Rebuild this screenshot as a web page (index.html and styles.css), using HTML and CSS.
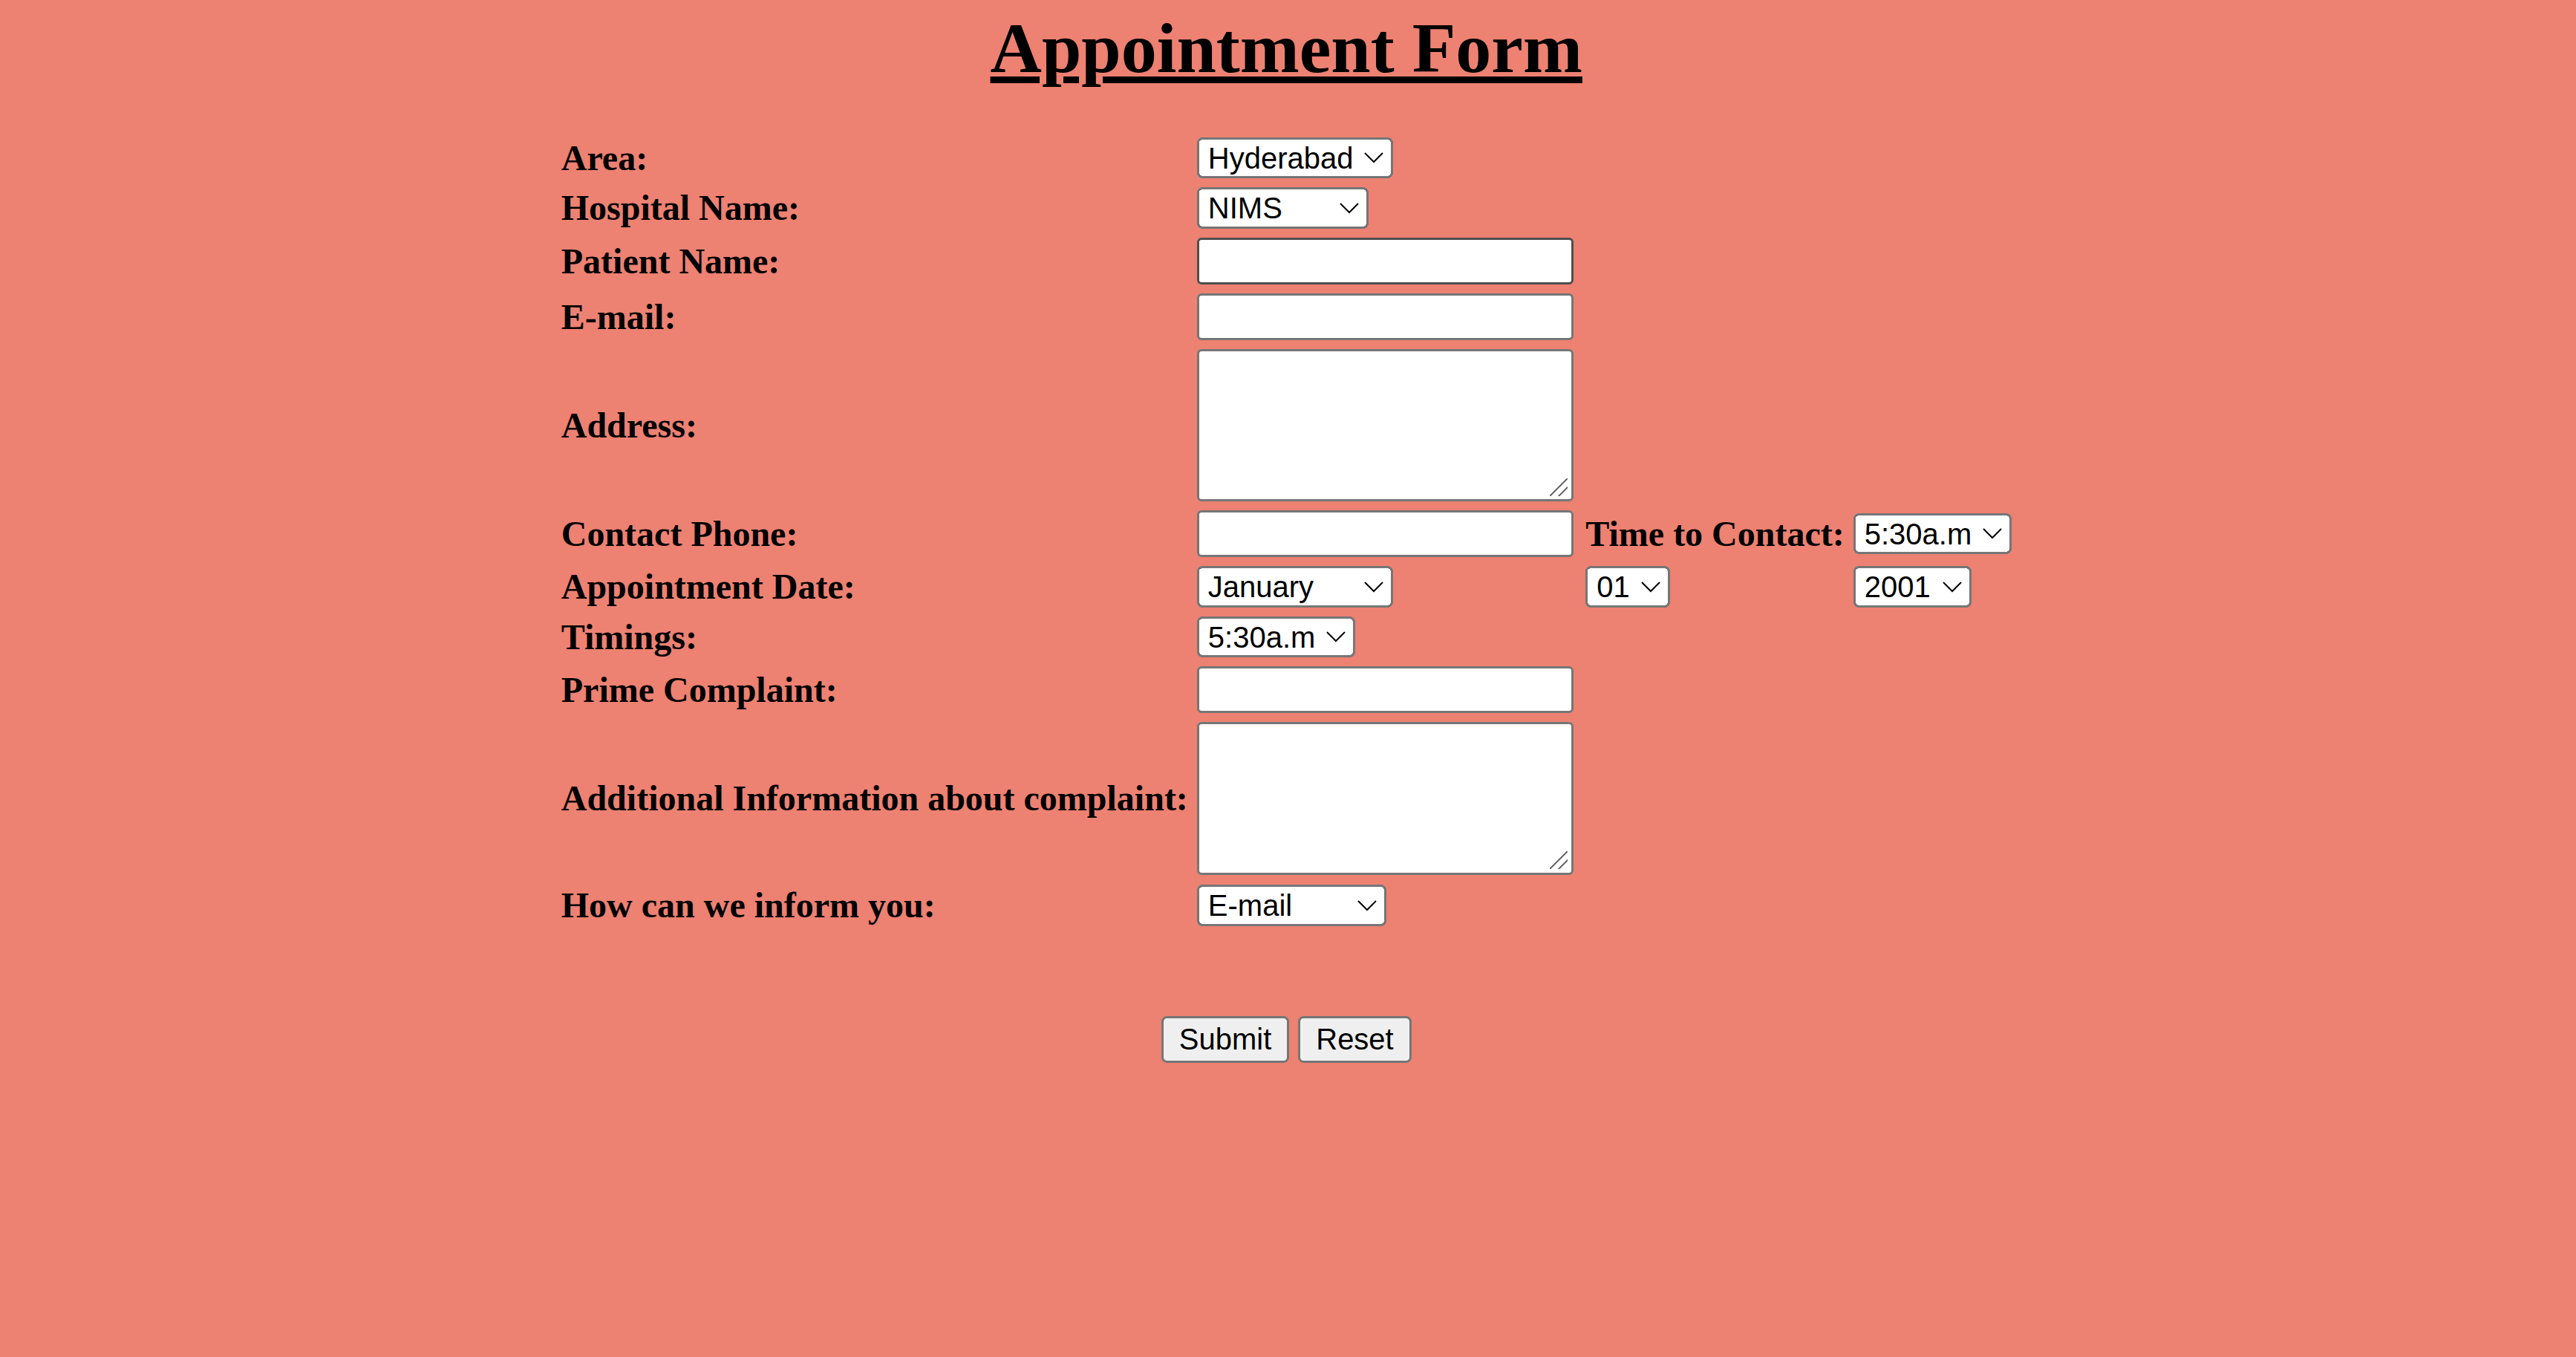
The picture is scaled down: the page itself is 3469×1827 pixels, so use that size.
FILE: index.html
```html
<!DOCTYPE html>
<html lang="en">
<head>
<meta charset="utf-8">
<title>Appointment Form</title>
<link rel="stylesheet" href="styles.css">
</head>
<body>
<h1 class="title">Appointment Form</h1>
<form class="appt-form">
  <table class="grid">
    <tr>
      <th class="lbl">Area:</th>
      <td class="ctrl"><select class="sel sel-area"><option>Hyderabad</option><option>Secunderabad</option></select></td>
    </tr>
    <tr>
      <th class="lbl">Hospital Name:</th>
      <td><select class="sel sel-hosp"><option>NIMS</option><option>Apollo</option><option>Yashoda</option></select></td>
    </tr>
    <tr>
      <th class="lbl">Patient Name:</th>
      <td><input type="text" class="field field-hover"></td>
    </tr>
    <tr>
      <th class="lbl">E-mail:</th>
      <td><input type="text" class="field"></td>
    </tr>
    <tr>
      <th class="lbl">Address:</th>
      <td><textarea class="area"></textarea></td>
    </tr>
    <tr>
      <th class="lbl">Contact Phone:</th>
      <td><input type="text" class="field"></td>
      <th class="lbl">Time to Contact:</th>
      <td><select class="sel sel-time"><option>5:30a.m</option><option>6:30a.m</option></select></td>
    </tr>
    <tr>
      <th class="lbl">Appointment Date:</th>
      <td><select class="sel sel-month"><option>January</option><option>February</option></select></td>
      <td><select class="sel sel-day"><option>01</option><option>02</option></select></td>
      <td><select class="sel sel-year"><option>2001</option><option>2002</option></select></td>
    </tr>
    <tr>
      <th class="lbl">Timings:</th>
      <td><select class="sel sel-time"><option>5:30a.m</option><option>6:30a.m</option></select></td>
    </tr>
    <tr>
      <th class="lbl">Prime Complaint:</th>
      <td><input type="text" class="field"></td>
    </tr>
    <tr>
      <th class="lbl">Additional Information about complaint:</th>
      <td><textarea class="area"></textarea></td>
    </tr>
    <tr>
      <th class="lbl">How can we inform you:</th>
      <td><select class="sel sel-inform"><option>E-mail</option><option>Phone</option></select></td>
    </tr>
  </table>
  <div class="actions">
    <input type="submit" class="btn" value="Submit">
    <input type="reset" class="btn" value="Reset">
  </div>
</form>
</body>
</html>
```

FILE: styles.css
```css
html {
  zoom: 3;
  background: #ed8172;
}

body {
  margin: 0;
  padding-right: 1.5px;
  background: #ed8172;
  color: #000;
  font-family: "Liberation Serif", "Times New Roman", serif;
  font-size: 16px;
}

.title {
  margin: 3px 0 18.5px;
  font-size: 32px;
  font-weight: bold;
  text-align: center;
  text-decoration: underline;
  text-decoration-thickness: 3px;
  text-underline-offset: 2px;
}

.appt-form {
  margin: 0;
}

.grid {
  margin: 0 auto;
  border-spacing: 2px;
}

.grid th,
.grid td {
  padding: 1px;
  vertical-align: middle;
}

.grid .ctrl {
  width: 170.5px;
}

.lbl {
  text-align: left;
  font-weight: bold;
  white-space: nowrap;
}

.sel,
.field,
.area,
.btn {
  font-family: "Liberation Sans", Arial, sans-serif;
  font-size: 13.333px;
  color: #000;
}

.sel {
  box-sizing: border-box;
  display: block;
  height: 18.5px;
  margin: 0;
}

.date-row .sel,
.sel-inform {
  margin-top: 0.5px;
  margin-bottom: 0.5px;
}

.sel-area { width: 88px; }
.sel-hosp { width: 77px; }
.sel-month { width: 88px; }
.sel-day { width: 38px; }
.sel-year { width: 53px; }
.sel-time { width: 71px; }
.sel-inform { width: 85px; }

.field {
  box-sizing: border-box;
  display: block;
  width: 169px;
  height: 21px;
  margin: 0;
  padding: 1px 2px;
  background: #fff;
  border: 1px solid #767676;
  border-radius: 2px;
}

.field-hover {
  border-color: #4f4f4f;
}

.area {
  box-sizing: border-box;
  display: block;
  width: 169px;
  height: 68.5px;
  margin: 0;
  padding: 2px;
  border: 1px solid #767676;
  border-radius: 2px;
  resize: none;
  font-family: "Liberation Mono", monospace;
  background-color: #fff;
  background-image: linear-gradient(135deg,
    transparent 0 46%, #6f6f6f 46% 53%,
    transparent 53% 72%, #6f6f6f 72% 79%,
    transparent 79%);
  background-size: 8px 8px;
  background-position: right 1.5px bottom 1.5px;
  background-repeat: no-repeat;
}

.actions {
  margin-top: 37px;
  text-align: center;
}

.btn {
  margin: 0;
}
```
